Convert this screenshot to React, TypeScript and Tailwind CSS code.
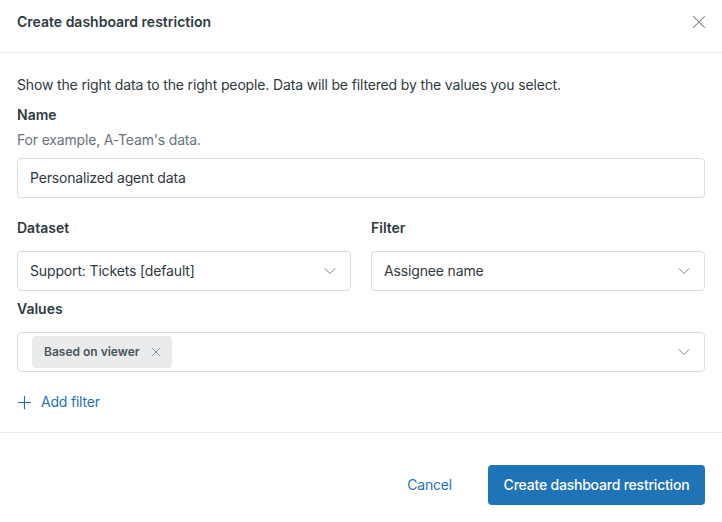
import { ChevronDown, Plus, X } from 'lucide-react'

function SelectBox({ children }: { children: React.ReactNode }) {
  return (
    <div className="h-10 flex items-center justify-between rounded border border-[#d8dcde] bg-white pl-3 pr-[10px] text-[#2f3941]">
      <div className="flex items-center tracking-[-0.15px]">{children}</div>
      <ChevronDown size={20} strokeWidth={1.1} className="text-[#68737d]" />
    </div>
  )
}

export default function App() {
  return (
    <main className="w-[722px] h-[522px] bg-white overflow-hidden text-[14px] leading-5 text-[#2f3941] font-['Inter',sans-serif]">
      <header className="h-[53px] flex items-center justify-between border-b border-[#e9ebed] pl-[17px] pr-3 pb-2">
        <h1 className="font-semibold">Create dashboard restriction</h1>
        <X size={22} strokeWidth={1.1} className="text-[#68737d]" />
      </header>

      <section className="px-[17px] pt-[22px]">
        <p className="h-5 tracking-[-0.15px]">Show the right data to the right people. Data will be filtered by the values you select.</p>

        <label className="block mt-[10px] font-semibold">Name</label>
        <p className="mt-[5px] text-[#68737d] tracking-[-0.17px]">For example, A-Team's data.</p>
        <div className="mt-2 h-10 flex items-center rounded border border-[#d8dcde] px-3 tracking-[-0.17px]">Personalized agent data</div>

        <div className="mt-5 grid grid-cols-2 gap-5">
          <div>
            <label className="block font-semibold">Dataset</label>
            <div className="mt-[13px]">
              <SelectBox>Support: Tickets [default]</SelectBox>
            </div>
          </div>
          <div>
            <label className="block font-semibold">Filter</label>
            <div className="mt-[13px]">
              <SelectBox>Assignee name</SelectBox>
            </div>
          </div>
        </div>

        <label className="block mt-2 font-semibold">Values</label>
        <div className="mt-[13px]">
          <SelectBox>
            <span className="ml-[2px] h-8 flex items-center gap-[9px] rounded bg-[#e9ebed] pl-3 pr-[9px] text-[12px] font-semibold tracking-normal text-[#49545c]">
              Based on viewer
              <X size={14} strokeWidth={1.25} className="text-[#68737d]" />
            </span>
          </SelectBox>
        </div>

        <button className="mt-5 -ml-[3px] h-5 flex items-center gap-[6px] text-[#1f73b7] tracking-[-0.2px]">
          <Plus size={21} strokeWidth={1.25} />
          Add filter
        </button>
      </section>

      <div className="mt-5 border-t border-[#e9ebed]" />

      <footer className="flex items-center justify-end pt-8 pr-[17px]">
        <button className="text-[#1f73b7] mr-9 tracking-[-0.2px]">Cancel</button>
        <button className="h-10 w-[217px] rounded bg-[#1f73b7] font-medium text-white tracking-[-0.21px]">Create dashboard restriction</button>
      </footer>
    </main>
  )
}
